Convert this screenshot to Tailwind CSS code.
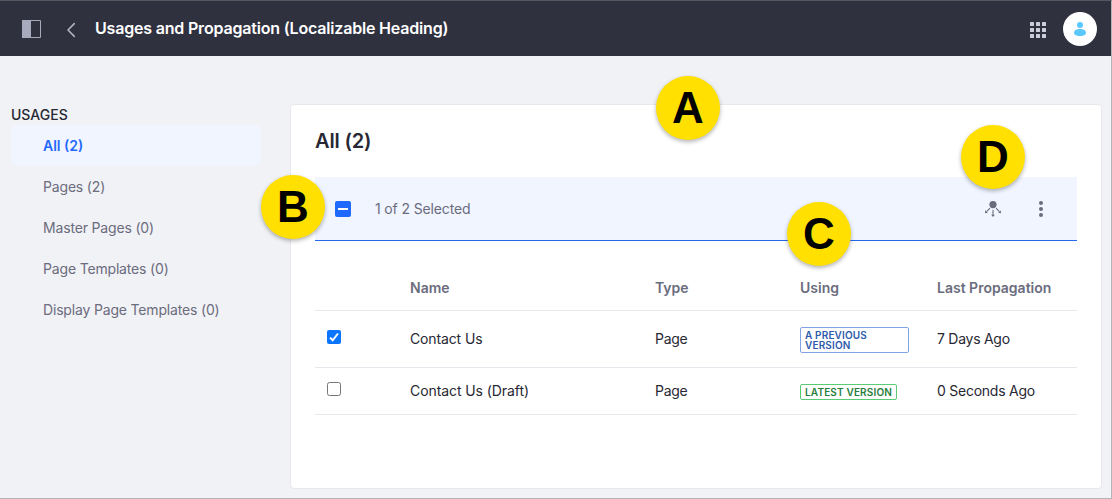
<!DOCTYPE html>
<html lang="en">
<head>
<meta charset="utf-8">
<title>Usages and Propagation</title>
<script src="https://cdn.jsdelivr.net/npm/@tailwindcss/browser@4"></script>
</head>
<body class="font-['Inter',sans-serif] text-[14px] leading-[21px] text-[#272833]">
<div class="relative flex h-[499px] w-[1112px] flex-col overflow-hidden border-t border-r border-b border-t-[#56575f] border-r-[#b4b5b9] border-b-[#b4b5b9] bg-[#f1f2f5]">
  <header class="flex h-[55px] shrink-0 items-center bg-[#30313f] pr-[14px] pl-[22px]">
    <svg class="h-[18px] w-[19px]" viewBox="0 0 19 18"><path d="M.5.5h18v17H.5z" fill="none" stroke="#a7a9bc"/><path d="M0 0h9v18H0z" fill="#a7a9bc"/></svg>
    <svg class="mt-[2px] ml-[25px] h-[16px] w-[10px]" viewBox="0 0 10 16"><path d="M8.300 1.600 2 8l6.300 6.400" fill="none" stroke="#b4b6c6" stroke-width="1.500" stroke-linecap="round" stroke-linejoin="round"/></svg>
    <h1 class="ml-[19px] text-[16px] font-semibold tracking-[-0.19px] whitespace-nowrap text-white">Usages and Propagation (Localizable Heading)</h1>
    <svg class="mt-[2px] ml-auto h-[16px] w-[16px]" viewBox="0 0 16 16" fill="#cdced9"><rect width="4" height="4" rx=".5"/><rect x="6" width="4" height="4" rx=".5"/><rect x="12" width="4" height="4" rx=".5"/><rect y="6" width="4" height="4" rx=".5"/><rect x="6" y="6" width="4" height="4" rx=".5"/><rect x="12" y="6" width="4" height="4" rx=".5"/><rect y="12" width="4" height="4" rx=".5"/><rect x="6" y="12" width="4" height="4" rx=".5"/><rect x="12" y="12" width="4" height="4" rx=".5"/></svg>
    <div class="ml-[17px] flex h-[34px] w-[34px] items-center justify-center rounded-full bg-white">
      <svg class="h-[14px] w-[12px]" viewBox="0 0 12 14" fill="#5ac8fa"><circle cx="6" cy="3" r="3"/><path d="M0 10.800C0 8.300 2.700 7 6 7s6 1.300 6 3.800C12 13.100 9.300 14 6 14s-6-.900-6-3.200z"/></svg>
    </div>
  </header>

  <main class="flex flex-1">
    <nav class="mr-px ml-[11px] w-[250px] pt-[48px]">
      <h2 class="h-[21px] font-medium text-[#272833]"><span>USAGES</span></h2>
      <ul class="tracking-[-0.17px] text-[#6b6c7e]">
        <li class="flex h-[41px] items-center rounded-md bg-[#f0f5ff] pl-8 font-semibold tracking-normal text-[#1f69ff]"><span>All (2)</span></li>
        <li class="flex h-[41px] items-center pl-8"><span>Pages (2)</span></li>
        <li class="flex h-[41px] items-center pl-8"><span>Master Pages (0)</span></li>
        <li class="flex h-[41px] items-center pl-8"><span>Page Templates (0)</span></li>
        <li class="flex h-[41px] items-center pl-8"><span>Display Page Templates (0)</span></li>
      </ul>
    </nav>

    <section class="mt-[48px] ml-[28px] h-[385px] w-[812px] rounded border border-[#e7e7ed] bg-white px-6">
      <h2 class="flex h-[72px] items-center text-[20px] font-semibold tracking-[-0.15px]"><span>All (2)</span></h2>
      <div class="flex h-[64px] items-center border-b border-[#2468e8] bg-[#f0f5ff] pl-5 text-[#6b6c7e]">
        <span class="flex h-4 w-4 items-center justify-center rounded-xs bg-[#1f69ff]"><span class="h-[2px] w-[10px] bg-white"></span></span>
        <span class="ml-6 tracking-[-0.14px]">1 of 2 Selected</span>
        <svg class="ml-auto h-[16px] w-[16px]" viewBox="0 0 16 16" fill="#6b6c7e"><circle cx="8" cy="3.600" r="3.600"/><path d="M5 7.200 1.800 10.400M11 7.200l3.200 3.200M8 9v5" stroke="#6b6c7e" stroke-width="1.100"/><path d="M.3 9.300 2.900 11.800 0 12.200zM15.700 9.300l-2.600 2.500 2.900.4zM6.200 13.700h3.600L8 16z"/></svg>
        <svg class="mr-[34px] ml-[38px] h-[16px] w-[4px]" viewBox="0 0 4 16" fill="#6b6c7e"><circle cx="2" cy="2" r="2"/><circle cx="2" cy="8" r="2"/><circle cx="2" cy="14" r="2"/></svg>
      </div>

      <div class="mt-[24px] grid h-[46px] grid-cols-[95px_245px_145px_137px_1fr] items-center border-b border-[#e7e7ed] font-semibold text-[#6b6c7e]">
        <span></span><span>Name</span><span>Type</span><span>Using</span><span>Last Propagation</span>
      </div>
      <div class="grid h-[57px] grid-cols-[95px_245px_145px_137px_1fr] items-center border-b border-[#e7e7ed]">
        <span class="mb-[4px] ml-3 flex h-[14px] w-[14px] rounded-[2px] bg-[#0b75ff]"><svg class="h-[14px] w-[14px]" viewBox="0 0 14 14"><path d="m3 7.600 2.700 2.700L11 3.500" fill="none" stroke="#fff" stroke-width="2"/></svg></span>
        <span class="mb-[2px] tracking-[-0.13px]">Contact Us</span><span class="mb-[2px] tracking-[-0.3px]">Page</span>
        <span class="mt-[2px] flex h-[26px] w-[109px] flex-col justify-center rounded-xs border border-[#80a3e5] bg-white pl-1 text-[10px] leading-[10px] font-semibold tracking-[0.16px] text-[#2e5aac]"><span>A PREVIOUS</span><span>VERSION</span></span>
        <span class="mb-[2px] tracking-[-0.27px]">7 Days Ago</span>
      </div>
      <div class="grid h-[47px] grid-cols-[95px_245px_145px_137px_1fr] items-center border-b border-[#e7e7ed]">
        <span class="mb-[4px] ml-3 h-[14px] w-[14px] rounded-[2.500px] border border-[#767676] bg-white"></span>
        <span class="mb-[2px] tracking-[-0.08px]">Contact Us (Draft)</span><span class="mb-[2px] tracking-[-0.3px]">Page</span>
        <span class="mt-[2px] flex h-[16px] w-[97px] items-center rounded-xs border border-[#5aca75] bg-white pl-1 text-[10px] leading-[10px] font-semibold tracking-[0.16px] text-[#287d3c]"><span>LATEST VERSION</span></span>
        <span class="mb-[2px] tracking-[-0.25px]">0 Seconds Ago</span>
      </div>
    </section>
  </main>

  <div class="absolute top-[75px] left-[656px] flex h-16 w-16 items-center justify-center rounded-full bg-[#ffe000] font-['Liberation_Sans',sans-serif] text-[44px] leading-none font-bold text-black shadow-[0_2px_4px_rgba(0,0,0,0.3)]">A</div>
  <div class="absolute top-[174px] left-[261px] flex h-16 w-16 items-center justify-center rounded-full bg-[#ffe000] font-['Liberation_Sans',sans-serif] text-[44px] leading-none font-bold text-black shadow-[0_2px_4px_rgba(0,0,0,0.3)]">B</div>
  <div class="absolute top-[201px] left-[787px] flex h-16 w-16 items-center justify-center rounded-full bg-[#ffe000] font-['Liberation_Sans',sans-serif] text-[44px] leading-none font-bold text-black shadow-[0_2px_4px_rgba(0,0,0,0.3)]">C</div>
  <div class="absolute top-[123.500px] left-[961px] flex h-16 w-16 items-center justify-center rounded-full bg-[#ffe000] font-['Liberation_Sans',sans-serif] text-[44px] leading-none font-bold text-black shadow-[0_2px_4px_rgba(0,0,0,0.3)]">D</div>
</div>
</body>
</html>
